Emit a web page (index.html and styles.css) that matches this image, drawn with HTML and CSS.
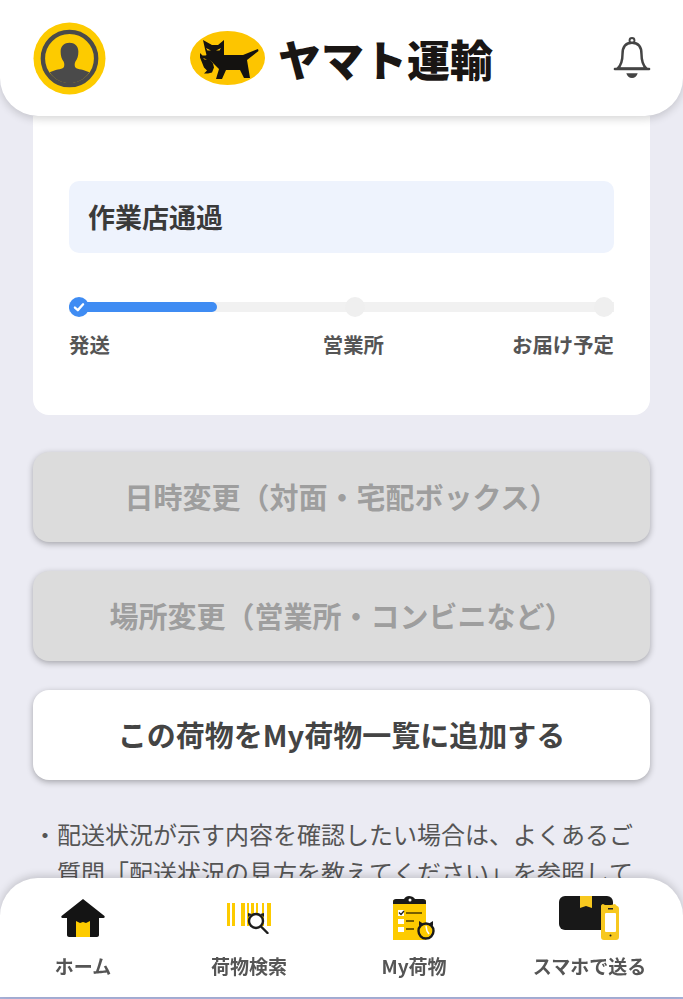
FILE: index.html
```html
<!DOCTYPE html>
<html lang="ja">
<head>
    <meta charset="UTF-8">
    <meta name="viewport" content="width=device-width, initial-scale=1.0">
    <title>ヤマト運輸</title>
    <link rel="stylesheet" href="styles.css">
</head>
<body>
    <header class="top-bar">
        <svg class="avatar" viewBox="0 0 74 74">
            <circle cx="37" cy="37" r="36.5" fill="#fdcb00"/>
            <circle cx="37" cy="37" r="27" fill="none" stroke="#4a4a4a" stroke-width="4.5"/>
            <path d="M17 51c5-3 12-3 14-5 1-1 1-4 0-6-2-2-3-6-3-10 0-6 4-9 9-9s9 3 9 9c0 4-1 8-3 10-1 2-1 5 0 6 2 2 9 2 14 5-4 7-12 11-20 11s-16-4-20-11z" fill="#4a4a4a"/>
        </svg>
        <div class="logo">
            <svg class="logo-mark" viewBox="0 0 75 54">
                <ellipse cx="37.5" cy="27" rx="37.5" ry="27" fill="#fdc500"/>
                <path d="M13 9l9 5h6l6-5v15h19l15-6 .5 2-11.500 9 3 18h-6l-4-8H36l-4 9h-6l3-10-7-7-5-5-2-8z" fill="#141210"/>
                <path d="M10 22l2.500 2.500h3l2.500-1 2 5 3 4 1 4-2 5-4 1h-4l3-3-3-3-2-5-2-5z" fill="#141210"/>
                <path d="M16 17l5 2.500h-3.500zM31 17l-5 2.500h3.500zM13 27l4 1.500h-2.500z" fill="#fdc500"/>
            </svg>
            <span class="logo-text">ヤマト運輸</span>
        </div>
        <svg class="bell" viewBox="0 0 40 46" fill="none" stroke="#444" stroke-width="2.6">
            <circle cx="20" cy="4.500" r="2.600" stroke-width="2"/>
            <path d="M20 7c-7 0-10 5-10 12 0 8-2 12-5 15h30c-3-3-5-7-5-15 0-7-3-12-10-12z"/>
            <path d="M2 34.500h36" stroke-linecap="round"/>
            <path d="M14 39h12c-1 3-3 5-6 5s-5-2-6-5z" fill="#444" stroke="none"/>
        </svg>
    </header>

    <main class="content">
        <section class="status-card">
            <div class="status-box">作業店通過</div>
            <div class="progress">
                <div class="progress-fill"></div>
                <span class="dot dot-done">
                    <svg viewBox="0 0 12 12" fill="none" stroke="#fff" stroke-width="2" stroke-linecap="round" stroke-linejoin="round"><path d="M2.500 6.500l2.500 2.200 4.500-5"/></svg>
                </span>
                <span class="dot dot-mid"></span>
                <span class="dot"></span>
            </div>
            <div class="progress-labels">
                <span>発送</span>
                <span class="label-mid">営業所</span>
                <span>お届け予定</span>
            </div>
        </section>

        <button class="action disabled">日時変更（対面・宅配ボックス）</button>
        <button class="action disabled">場所変更（営業所・コンビニなど）</button>
        <button class="action">この荷物をMy荷物一覧に追加する</button>

        <ul class="notes">
            <li>配送状況が示す内容を確認したい場合は、よくあるご質問「配送状況の見方を教えてください」を参照してください。</li>
        </ul>
    </main>

    <nav class="tab-bar">
        <a class="tab">
            <svg viewBox="0 0 44 38" class="tab-icon tab-home">
                <path d="M22 0l21.500 17c.5 1 0 2-1 2H38v17c0 1-1 2-2 2H8c-1 0-2-1-2-2V19H1.500c-1 0-1.500-1-1-2z" fill="#141414"/>
                <path d="M15 22l4 2 3-1 3 1 4-2v16H15z" fill="#fdcb00"/>
            </svg>
            <span>ホーム</span>
        </a>
        <a class="tab">
            <svg viewBox="0 0 44 31" class="tab-icon tab-search">
                <path d="M0 0h3v23H0zM5 0h3v23H5zM14 0h4v23h-4zM20 0h2v23h-2zM24 0h3v23h-3zM29 0h2v23h-2zM35 0h2v23h-2zM40 0h4v23h-4z" fill="#fdcb00"/>
                <circle cx="29" cy="18" r="7" fill="#fff" stroke="#1c1c1c" stroke-width="2.400"/>
                <path d="M21 10v4l4-3zM37 10v4l-4-3z" fill="#1c1c1c"/>
                <path d="M34.500 24l6 6" stroke="#1c1c1c" stroke-width="2.400" stroke-linecap="round"/>
            </svg>
            <span>荷物検索</span>
        </a>
        <a class="tab">
            <svg viewBox="0 0 42 44" class="tab-icon tab-mine">
                <path d="M0 4h33v40H0z" fill="#fdcb00"/>
                <path d="M0 6c0-2 1-3 3-3h8c1-2 3-3 5-3s5 1 6 3h8c2 0 3 1 3 3v1c0 1 0 1-1 1H1C0 8 0 8 0 7z" fill="#1a1a1a"/>
                <circle cx="17" cy="4" r="1.500" fill="#fff"/>
                <path d="M5 14h6v6H5zM5 23h6v5H5zM5 31h6v5H5z" fill="#fff"/>
                <path d="M6 16.500l2 2 3-3.500" fill="none" stroke="#222" stroke-width="1.400"/>
                <path d="M13 17h16M13 25h8M13 33h8" stroke="#4a3c00" stroke-width="1.600"/>
                <circle cx="33" cy="35" r="7.500" fill="#fdcb00" stroke="#1a1a1a" stroke-width="2.400"/>
                <path d="M26 30v-5l4 2.500zM40 30v-5l-4 2.500z" fill="#1a1a1a"/>
                <path d="M33 30l1 5 2 3" fill="none" stroke="#fff" stroke-width="1.500"/>
            </svg>
            <span>My荷物</span>
        </a>
        <a class="tab">
            <svg viewBox="0 0 62 45" class="tab-icon tab-send">
                <rect x="0" y="1" width="54" height="34" rx="6" fill="#181818"/>
                <path d="M21 1h12v12l-6-2-6 2z" fill="#f7c81f"/>
                <path d="M42 11c0-1 1-2 2-2l2 1h6l4-1 2 2c1 0 2 1 2 3v28c0 2-1 3-3 3H45c-2 0-3-1-3-3z" fill="#f7c81f"/>
                <rect x="46" y="18" width="11" height="19" rx="1" fill="#fff"/>
                <rect x="49" y="13" width="5" height="1.500" fill="#222"/>
                <circle cx="51.500" cy="40.500" r="1" fill="#222"/>
            </svg>
            <span>スマホで送る</span>
        </a>
    </nav>
</body>
</html>
```

FILE: styles.css
```css
* {
    box-sizing: border-box;
}
html, body {
    height: 100%;
}
body {
    margin: 0;
    overflow: hidden;
    font-family: "Noto Sans CJK JP", "Noto Sans", sans-serif;
    color: #444;
    background-color: #ebebf3;
}
.top-bar {
    position: relative;
    z-index: 2;
    height: 116px;
    padding: 22px 32px 0 33px;
    display: flex;
    justify-content: space-between;
    align-items: flex-start;
    background-color: white;
    border-radius: 0 0 38px 38px;
    box-shadow: 0 3px 8px rgba(0, 0, 0, 0.16);
}
.avatar {
    width: 73px;
    height: 73px;
}
.logo {
    display: flex;
    align-items: center;
    gap: 13px;
    margin: 9px 36px 0 0;
}
.logo-mark {
    width: 75px;
    height: 54px;
}
.logo-text {
    font-size: 43px;
    line-height: 54px;
    font-weight: 900;
    color: #1a1614;
}
.bell {
    width: 38px;
    height: 44px;
    margin-top: 14px;
}
.content {
    padding: 0 33px;
}
.status-card {
    height: 299px;
    padding: 65px 36px 0;
    background-color: white;
    border-radius: 0 0 16px 16px;
}
.status-box {
    height: 72px;
    padding-left: 19px;
    font-size: 27px;
    font-weight: 700;
    line-height: 72px;
    color: #3a3a3a;
    background-color: #eef3fd;
    border-radius: 10px;
}
.progress {
    position: relative;
    display: flex;
    justify-content: space-between;
    align-items: center;
    height: 20px;
    margin-top: 44px;
    background: linear-gradient(#f1f1f1, #f1f1f1) center / 100% 10px no-repeat;
}
.progress-fill {
    position: absolute;
    left: 0;
    top: 5px;
    width: 148px;
    height: 10px;
    background-color: #3f8cf3;
    border-radius: 5px;
}
.dot {
    position: relative;
    width: 20px;
    height: 20px;
    background-color: #efefef;
    border-radius: 50%;
}
.dot-mid {
    margin-left: 26px;
}
.dot-done {
    display: flex;
    padding: 3px;
    background-color: #3f8cf3;
}
.progress-labels {
    position: relative;
    display: flex;
    justify-content: space-between;
    margin-top: 12px;
    font-size: 20.4px;
    font-weight: 700;
    line-height: 30px;
    color: #555;
}
.label-mid {
    margin-left: 85px;
}
.action {
    display: block;
    width: 100%;
    height: 90px;
    margin-top: 29px;
    padding: 0 0 3px;
    border: none;
    border-radius: 16px;
    font-family: inherit;
    font-size: 29px;
    font-weight: 700;
    color: #444;
    background-color: white;
    box-shadow: 0 2px 6px rgba(0, 0, 0, 0.3);
}
.status-card + .action {
    margin-top: 37px;
}
.action.disabled {
    color: #9e9e9e;
    background-color: #dcdcdc;
}
.notes {
    margin: 35px 0 0;
    padding: 0 16px 0 24px;
    list-style: none;
    font-size: 24px;
    line-height: 38px;
    color: #555;
    font-kerning: none;
    text-spacing-trim: space-all;
}
.notes li {
    position: relative;
}
.notes li::before {
    content: "・";
    position: absolute;
    left: -24px;
}
.tab-bar {
    position: fixed;
    z-index: 2;
    left: 0;
    right: 0;
    bottom: 2px;
    height: 119px;
    display: grid;
    grid-template-columns: 166px 166px 164px 1fr;
    background-color: white;
    border-radius: 38px 38px 0 0;
    box-shadow: 0 -2px 8px rgba(0, 0, 0, 0.18);
}
body::after {
    content: "";
    position: fixed;
    left: 0;
    right: 0;
    bottom: 0;
    height: 2px;
    background-color: #aab4dc;
}
.tab {
    display: flex;
    flex-direction: column;
    align-items: center;
    justify-content: flex-end;
    padding-bottom: 17px;
    font-size: 19px;
    font-weight: 700;
    line-height: 28px;
    color: #555;
}
.tab-icon {
    flex: none;
}
.tab-home {
    width: 44px;
    height: 38px;
    margin-bottom: 15px;
}
.tab-search {
    width: 44px;
    height: 31px;
    margin: 0 0 18px -1px;
}
.tab-mine {
    width: 42px;
    height: 44px;
    margin-bottom: 12px;
}
.tab-send {
    width: 62px;
    height: 45px;
    margin-bottom: 12px;
}
```
